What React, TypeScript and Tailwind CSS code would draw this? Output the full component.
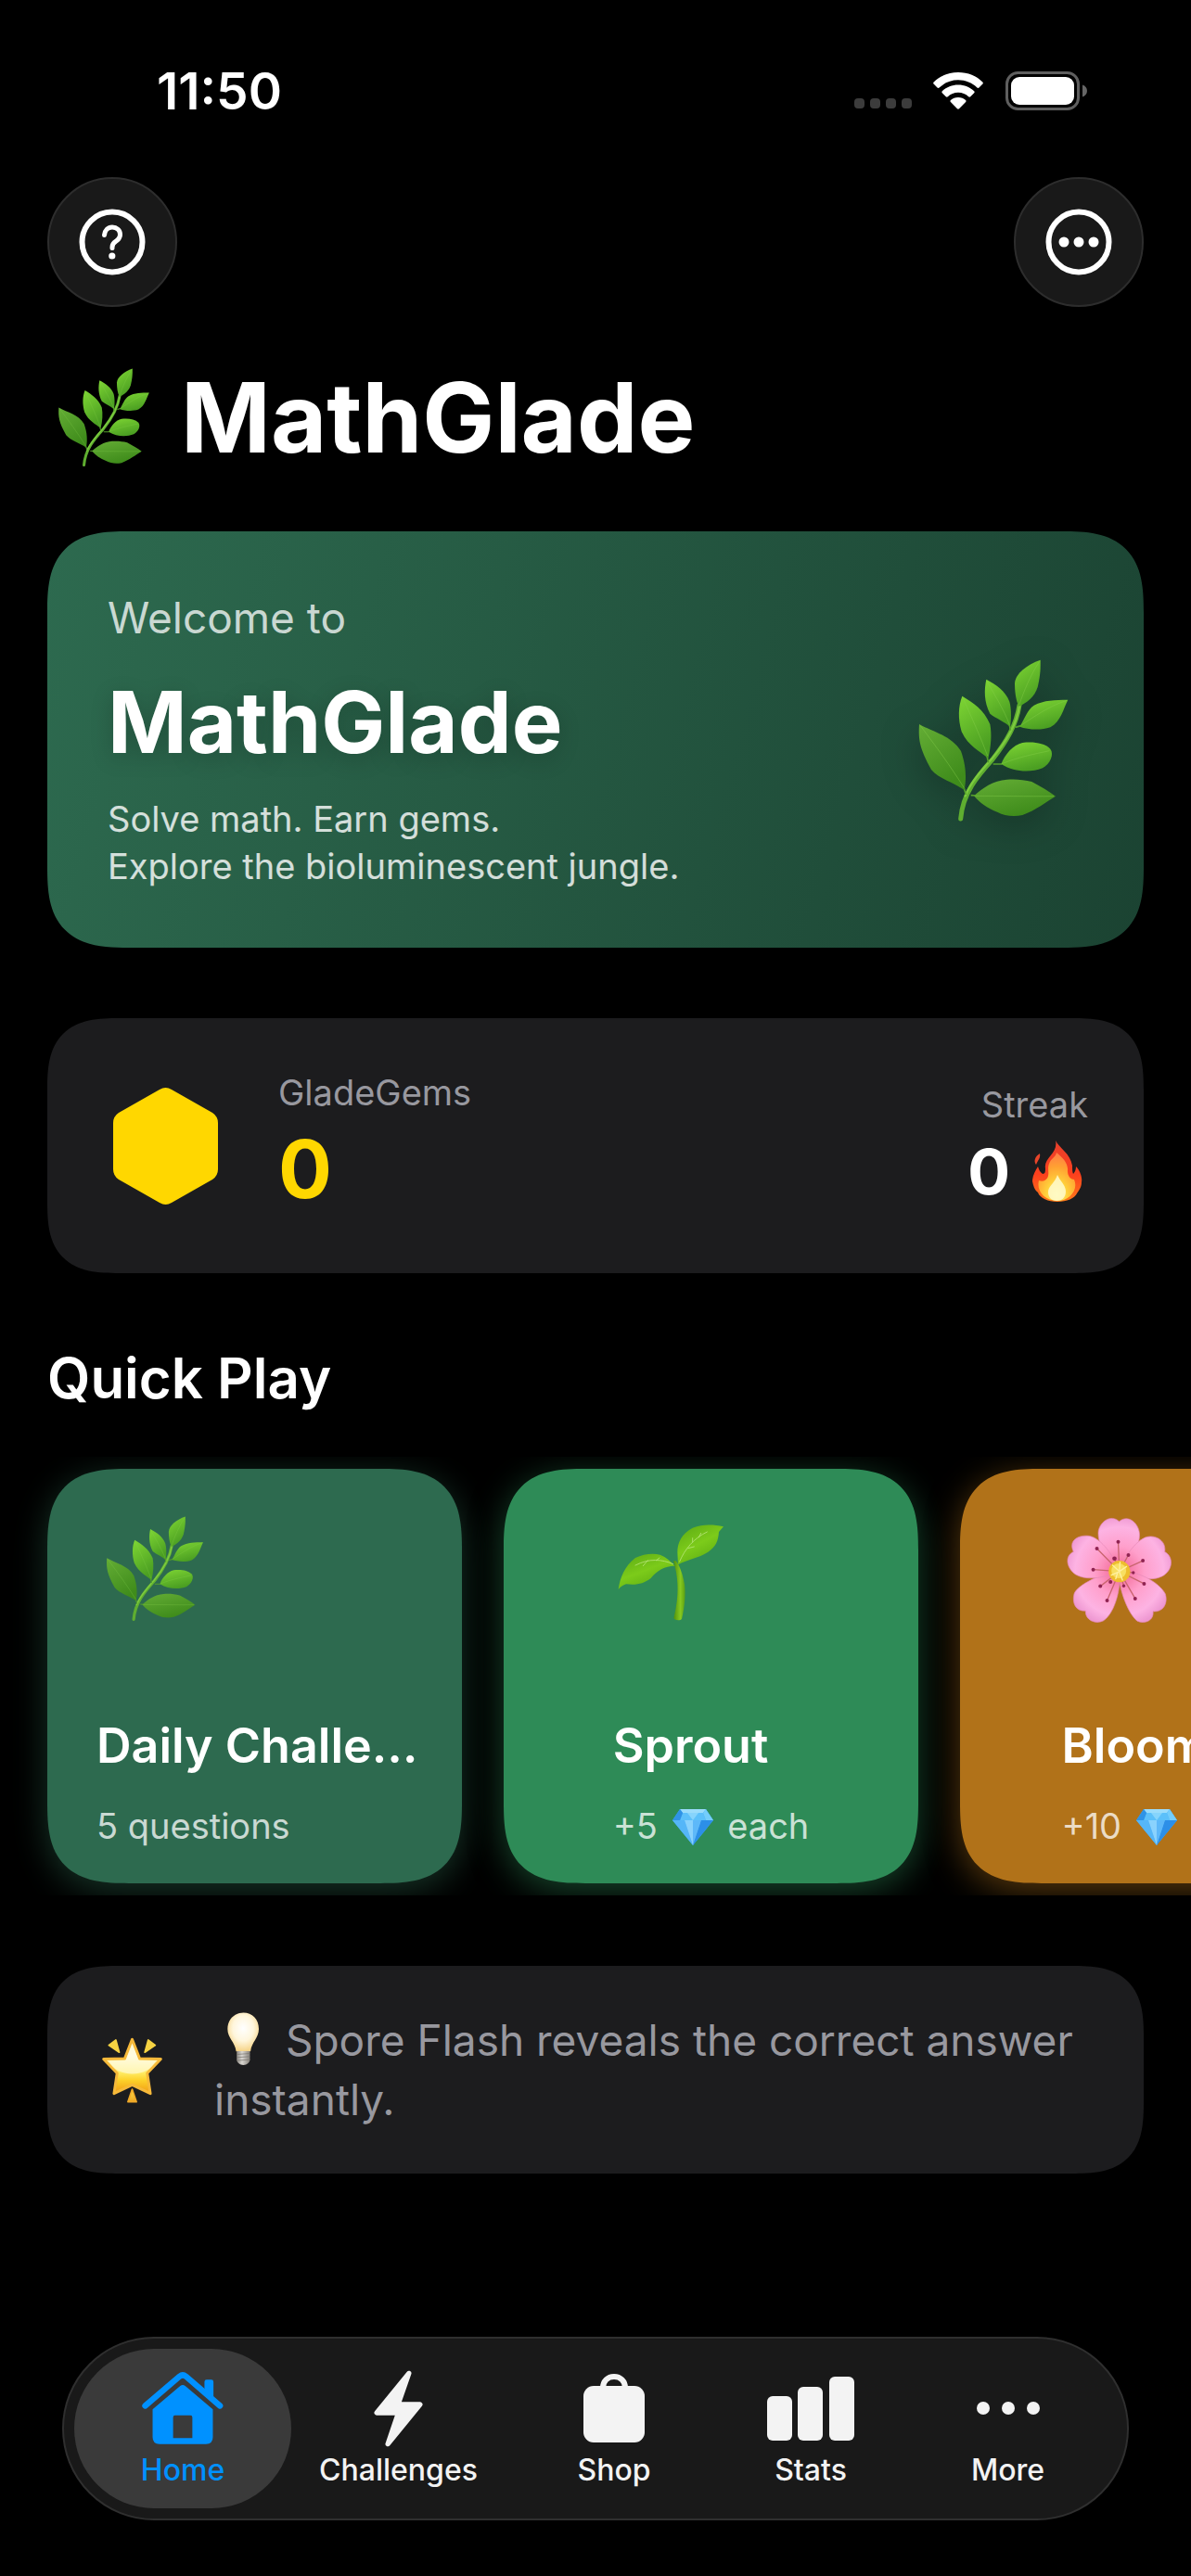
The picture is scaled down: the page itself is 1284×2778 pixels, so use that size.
import { useId } from "react";
import type { ReactNode } from "react";

type IconProps = { className?: string };

function Herb({ className }: IconProps) {
  const id = useId();
  const light = `${id}l`;
  const dark = `${id}d`;
  return (
    <svg viewBox="86 88 490 528" className={className} aria-hidden="true">
      <defs>
        <linearGradient id={light} x1="0" y1="0" x2="0.4" y2="1">
          <stop offset="0" stopColor="#7fd634" />
          <stop offset="1" stopColor="#4b9f22" />
        </linearGradient>
        <linearGradient id={dark} x1="0" y1="0" x2="0.5" y2="1">
          <stop offset="0" stopColor="#64ad35" />
          <stop offset="1" stopColor="#3f8c1b" />
        </linearGradient>
      </defs>
      <path d="M415 236C405 300 375 352 328 412C280 465 232 520 225 604" fill="none" stroke="#5fae30" strokeWidth="15" strokeLinecap="round" />
      <path d="M415 240C405 300 375 350 326 410C290 450 255 490 240 530" fill="none" stroke="#7dcb3f" strokeWidth="7" strokeLinecap="round" />
      <path d="M258 528L275 529M330 427H358M402 308L420 303M383 300L386 318M310 402L315 422M236 505L242 526" stroke="#55a02b" strokeWidth="5" />
      <path d="M483 90C440 105 402 134 400 165C400 190 403 220 413 240C440 229 465 208 474 178C480 150 484 130 483 90Z" fill={`url(#${light})`} />
      <path d="M308 153C301 185 300 225 320 264C340 280 368 290 384 306C389 290 390 250 383 225C370 190 340 170 308 153Z" fill={`url(#${light})`} />
      <path d="M230 207C217 240 216 280 228 322C250 370 288 385 314 408C324 370 326 330 320 298C300 250 265 228 230 207Z" fill={`url(#${light})`} />
      <path d="M91 298C88 350 92 375 130 445C155 475 200 485 237 511C244 470 243 435 226 385C195 335 140 325 91 298Z" fill={`url(#${dark})`} />
      <path d="M572 219C530 219 495 220 462 237C440 252 432 280 416 306C440 314 480 320 515 308C550 288 556 250 572 219Z" fill={`url(#${light})`} />
      <path d="M356 427C368 395 395 365 425 358C460 354 495 358 515 378C528 395 515 425 490 440C450 455 400 454 356 427Z" fill={`url(#${light})`} />
      <path d="M268 530C295 505 330 480 375 477C400 475 430 477 455 484C485 500 510 515 532 531C500 550 470 575 425 592C395 598 365 594 345 583C310 570 285 550 268 530Z" fill={`url(#${dark})`} />
      <g fill="none" stroke="#86cf4a" strokeOpacity="0.4" strokeWidth="3">
        <path d="M480 95C450 140 430 190 414 236M310 158C335 205 365 250 383 300M232 212C262 280 290 340 312 400M95 303C145 370 190 430 236 504M568 221C510 240 460 275 420 302M512 384C460 395 410 405 358 426M526 531C440 532 350 530 272 530" />
      </g>
    </svg>
  );
}

function Seedling({ className }: IconProps) {
  const id = useId();
  const leaf = `${id}a`;
  const stem = `${id}b`;
  return (
    <svg viewBox="80 104 348 316" className={className} aria-hidden="true">
      <defs>
        <linearGradient id={leaf} x1="0" y1="0" x2="0.6" y2="1">
          <stop offset="0" stopColor="#5aa814" />
          <stop offset="0.55" stopColor="#7ccb1a" />
          <stop offset="1" stopColor="#5fae12" />
        </linearGradient>
        <linearGradient id={stem} x1="0" y1="0" x2="1" y2="0">
          <stop offset="0" stopColor="#4f8f0c" />
          <stop offset="0.6" stopColor="#86c91f" />
          <stop offset="1" stopColor="#5c9f12" />
        </linearGradient>
      </defs>
      <path d="M263 224C278 275 284 330 264 410C268 417 285 418 290 412C300 370 303 330 299 300C294 270 284 240 271 224Z" fill={`url(#${stem})`} />
      <path d="M425 113C390 106 360 105 325 117C290 135 276 165 276 195L278 236C305 220 345 215 375 195C400 178 408 160 410 130Z" fill={`url(#${leaf})`} />
      <path d="M85 316C90 280 105 240 140 214C165 202 195 198 220 204C240 212 255 225 267 240C235 240 210 255 190 280C165 298 145 303 110 299C100 302 92 308 85 316Z" fill={`url(#${leaf})`} />
      <g fill="none" stroke="#b9e67c" strokeOpacity="0.8" strokeWidth="3" strokeLinecap="round">
        <path d="M283 226C300 185 330 150 372 130M325 163V150M345 148L352 134M310 183L330 178M262 234C225 218 185 215 140 238M208 222L218 214M180 222L165 240" />
      </g>
    </svg>
  );
}

function Blossom({ className }: IconProps) {
  const id = useId();
  const petal = `${id}p`;
  return (
    <svg viewBox="88 73 349 348" className={className} aria-hidden="true">
      <defs>
        <radialGradient id={petal} gradientUnits="userSpaceOnUse" cx="262" cy="252" r="180">
          <stop offset="0.1" stopColor="#f46f9c" />
          <stop offset="0.45" stopColor="#ff9fcb" />
          <stop offset="0.8" stopColor="#fdb3e3" />
          <stop offset="1" stopColor="#ee98d2" />
        </radialGradient>
      </defs>
      <g fill={`url(#${petal})`} stroke="#e58ab8" strokeWidth="2">
        <path d="M262 250C280 235 330 180 327 130C325 95 290 65 261 90C235 65 200 90 194 120C188 165 230 230 262 250Z" />
        <path d="M262 250C290 275 370 285 400 268C435 250 440 205 409 188C415 150 375 130 345 142C305 160 275 215 262 250Z" />
        <path d="M262 250C255 290 285 385 320 413C345 425 375 410 371 382C405 385 420 355 411 325C390 285 320 250 262 250Z" />
        <path d="M262 250C210 255 125 295 115 325C108 355 120 382 152 380C150 410 185 425 210 412C250 385 268 300 262 250Z" />
        <path d="M262 250C245 205 205 145 165 137C130 132 95 150 113 188C85 200 88 240 120 262C160 285 225 270 262 250Z" />
      </g>
      <g stroke="#c9656f" strokeWidth="4">
        <path d="M262 252L258 156M262 252L189 178M262 252L177 246M262 252L200 300M262 252L222 346M262 252L313 340M262 252L342 292M262 252L338 217M262 252L291 199M262 252L246 210M262 252L276 299M262 252L307 256" />
      </g>
      <g fill="#8f2352">
        <circle cx="258" cy="156" r="6" /><circle cx="189" cy="178" r="6" /><circle cx="177" cy="246" r="6" />
        <circle cx="200" cy="300" r="6" /><circle cx="222" cy="346" r="6" /><circle cx="313" cy="340" r="6" />
        <circle cx="342" cy="292" r="6" /><circle cx="338" cy="217" r="6" /><circle cx="291" cy="199" r="6" />
        <circle cx="246" cy="210" r="7" /><circle cx="276" cy="299" r="5" /><circle cx="307" cy="256" r="5" /><circle cx="233" cy="286" r="6" />
      </g>
      <circle cx="262" cy="252" r="35" fill="#eebd2e" />
      <circle cx="260" cy="250" r="24" fill="#f8df62" />
      <path d="M262 250L264 222M260 250L240 232M262 252L285 236M258 254L236 264M262 254L272 280M256 256L250 276" stroke="#fff0a0" strokeWidth="4" strokeLinecap="round" />
    </svg>
  );
}

function Gem({ className }: IconProps) {
  return (
    <svg viewBox="0 0 46 40" className={className} role="img" aria-label="gems">
      <path d="M9 1H37L45 13L23 40L1 13Z" fill="#3fa9f5" />
      <path d="M9 1H37L34 5H12Z" fill="#9bdcfb" />
      <path d="M12 5H34L37 13H9Z" fill="#5cc0fa" />
      <path d="M9 1L12 5L9 13H1Z" fill="#2f93e6" />
      <path d="M37 1L34 5L37 13H45Z" fill="#74cdfb" />
      <path d="M17 5L23 13L29 5Z" fill="#86d4fc" />
      <path d="M1 13H14L23 40Z" fill="#55b6f8" />
      <path d="M14 13H32L23 40Z" fill="#8ad2fd" />
      <path d="M23 13H32L23 40Z" fill="#5db8f9" />
      <path d="M32 13H45L23 40Z" fill="#2c8fe8" />
    </svg>
  );
}

function Flame({ className }: IconProps) {
  const id = useId();
  const outer = `${id}o`;
  const inner = `${id}i`;
  return (
    <svg viewBox="0 0 54 66" className={className} role="img" aria-label="fire">
      <defs>
        <linearGradient id={outer} x1="0" y1="0" x2="0" y2="1">
          <stop offset="0" stopColor="#e8402c" />
          <stop offset="0.55" stopColor="#fb3f1d" />
          <stop offset="1" stopColor="#ff7a1a" />
        </linearGradient>
        <radialGradient id={inner} cx="0.5" cy="0.88" r="0.85">
          <stop offset="0" stopColor="#fff27a" />
          <stop offset="0.35" stopColor="#ffcf3a" />
          <stop offset="0.7" stopColor="#ffa032" />
          <stop offset="1" stopColor="#ff7f45" />
        </radialGradient>
      </defs>
      <path d="M25 0C29 8 41 14 43 27C43 31 43 34 44 36C46 34 47 31 47 28C51 32 54 39 53 45C53 51 49 55 48 57C46 62 37 66 27 66C17 66 8 62 6 56C2 53 1 48 0 44C0 38 3 33 6 28C7 31 8 34 11 36C14 36 14 33 14 30C12 18 28 14 25 0Z" fill={`url(#${outer})`} />
      <path d="M8 14C9 19 6 21 4 26C1 22 3 17 8 14Z" fill="#e8452a" />
      <path d="M26 13C32 18 39 24 38 33C38 38 41 42 45 42C50 53 40 65 27 65C13 65 4 54 7 43C11 45 16 43 17 38C18 34 16 30 18 25C20 19 25 18 26 13Z" fill={`url(#${inner})`} />
      <path d="M27 37C30 44 36 48 36 55C36 62 31 65 26 65C21 65 17 61 17 56C17 49 24 46 27 37Z" fill="#fffbd0" fillOpacity="0.85" />
    </svg>
  );
}

function GlowStar({ className }: IconProps) {
  const id = useId();
  const fill = `${id}s`;
  const ray = `${id}r`;
  return (
    <svg viewBox="28 109 202 214" className={className} aria-hidden="true">
      <defs>
        <linearGradient id={fill} x1="0" y1="0" x2="0" y2="1">
          <stop offset="0" stopColor="#fff3a8" />
          <stop offset="0.3" stopColor="#fffbd8" />
          <stop offset="0.6" stopColor="#ffee6a" />
          <stop offset="0.75" stopColor="#fdd22a" />
          <stop offset="1" stopColor="#f19a14" />
        </linearGradient>
        <linearGradient id={ray} x1="0" y1="0" x2="0" y2="1">
          <stop offset="0" stopColor="#fbe24c" />
          <stop offset="1" stopColor="#eda623" />
        </linearGradient>
      </defs>
      <path d="M129 116L153 178L222 180L178 226L188 292L129 264L70 292L80 226L36 180L105 178Z" fill={`url(#${fill})`} stroke="#f6b93a" strokeWidth="9" strokeLinejoin="round" />
      <path d="M129 130L150 184L205 186C190 215 165 228 129 228C95 228 68 215 53 186L108 184Z" fill="#fffce6" fillOpacity="0.6" />
      <path d="M53 135L76 118L87 158ZM204 135L181 118L170 158Z" fill="#f6d343" stroke="#f6d343" strokeWidth="5" strokeLinejoin="round" />
      <path d="M129 278L143 319H115Z" fill={`url(#${ray})`} stroke="#f0a928" strokeWidth="5" strokeLinejoin="round" />
    </svg>
  );
}

function Bulb({ className }: IconProps) {
  const id = useId();
  const glass = `${id}g`;
  const cap = `${id}c`;
  return (
    <svg viewBox="437 34 106 174" className={className} role="img" aria-label="tip">
      <defs>
        <radialGradient id={glass} cx="0.5" cy="0.4" r="0.6">
          <stop offset="0" stopColor="#ffffff" />
          <stop offset="0.55" stopColor="#fff6dc" />
          <stop offset="1" stopColor="#f6d488" />
        </radialGradient>
        <linearGradient id={cap} x1="0" y1="0" x2="1" y2="0">
          <stop offset="0" stopColor="#8e8a84" />
          <stop offset="0.4" stopColor="#dad7d2" />
          <stop offset="1" stopColor="#858079" />
        </linearGradient>
      </defs>
      <path d="M490 35C462 35 438 56 438 88C438 118 462 130 466 161H513C517 130 540 118 540 88C540 56 518 35 490 35Z" fill={`url(#${glass})`} />
      <path d="M468 160H511V190C509 198 502 205 490 206C477 205 470 198 468 190Z" fill={`url(#${cap})`} />
      <path d="M468 171L511 168M468 181L511 178M469 191L511 188" stroke="#77726b" strokeWidth="2" />
    </svg>
  );
}

function HomeIcon() {
  return (
    <svg viewBox="69 83 262 233" className="h-[78px] w-[88px]" fill="#0091ff" aria-hidden="true">
      <path d="M79 192L190 97Q200 89 210 97L320 192" fill="none" stroke="#0091ff" strokeWidth="19" strokeLinecap="round" strokeLinejoin="round" />
      <path d="M270 140V115Q270 108 277 108H292Q299 108 299 115V170Z" />
      <path fillRule="evenodd" d="M103 203L192 128Q200 122 208 128L297 203V293Q297 315 275 315H125Q103 315 103 293ZM175 223Q169 223 169 229V296H231V229Q231 223 225 223Z" />
    </svg>
  );
}

function BoltIcon() {
  return (
    <svg viewBox="821 73 158 249" className="h-[83px] w-[53px]" aria-hidden="true">
      <path d="M934 83L830 211H900L866 312L970 184H899Z" fill="currentColor" stroke="currentColor" strokeWidth="16" strokeLinejoin="round" />
    </svg>
  );
}

function BagIcon() {
  return (
    <svg viewBox="0 0 66 74" className="h-[74px] w-[66px]" aria-hidden="true">
      <path d="M21 18V15C21 8 26 3 33 3C40 3 45 8 45 15V18" fill="none" stroke="currentColor" strokeWidth="6" />
      <rect x="0" y="13" width="66" height="61" rx="11" fill="currentColor" />
    </svg>
  );
}

function StatsIcon() {
  return (
    <svg viewBox="0 0 94 69" className="h-[69px] w-[94px]" fill="currentColor" aria-hidden="true">
      <rect x="0" y="21" width="27" height="48" rx="6" />
      <rect x="33" y="11" width="27" height="58" rx="6" />
      <rect x="67" y="0" width="27" height="69" rx="6" />
    </svg>
  );
}

function MoreIcon() {
  return (
    <svg viewBox="0 0 70 14" className="h-[14px] w-[70px]" fill="currentColor" aria-hidden="true">
      <circle cx="8" cy="7" r="7" />
      <circle cx="35" cy="7" r="7" />
      <circle cx="62" cy="7" r="7" />
    </svg>
  );
}

function StatusBar() {
  return (
    <div className="flex items-center justify-between pt-[68px] pr-[112px] pl-[169px]">
      <time className="text-[55px] leading-[60px] font-semibold">11:50</time>
      <div className="flex items-center">
        <svg viewBox="0 0 62 42" className="mr-[23px] h-[42px] w-[62px]" fill="#3c3c3c" aria-label="No signal" role="img">
          <rect x="0" y="29" width="11" height="11" rx="4" />
          <rect x="17" y="29" width="11" height="11" rx="4" />
          <rect x="34" y="29" width="11" height="11" rx="4" />
          <rect x="51" y="29" width="11" height="11" rx="4" />
        </svg>
        <svg viewBox="0 0 54 40" className="mr-[24px] h-[40px] w-[54px]" fill="currentColor" aria-label="Wi-Fi" role="img">
          <path d="M27 0C16.500 0 7 4 .7 10.500C0 11.200 0 12 .6 12.600L4.500 16.500C5.100 17.100 6 17.100 6.600 16.500C12 11.300 19.200 8.300 27 8.300C34.800 8.300 42 11.300 47.400 16.500C48 17.100 48.900 17.100 49.500 16.500L53.400 12.600C54 12 54 11.200 53.300 10.500C47 4 37.500 0 27 0Z" />
          <path d="M27 13.500C20.300 13.500 14.300 16 9.800 20.200C9.200 20.800 9.200 21.600 9.800 22.200L13.800 26.200C14.400 26.800 15.200 26.800 15.800 26.300C18.800 23.500 22.700 21.800 27 21.800C31.300 21.800 35.200 23.500 38.200 26.300C38.800 26.800 39.600 26.800 40.200 26.200L44.200 22.200C44.800 21.600 44.800 20.800 44.200 20.200C39.700 16 33.700 13.500 27 13.500Z" />
          <path d="M27 27C23.800 27 21 28.200 18.900 30.100C18.300 30.700 18.300 31.500 18.900 32L26 39.300C26.600 39.900 27.400 39.900 28 39.300L35.100 32C35.700 31.500 35.700 30.700 35.100 30.100C33 28.200 30.200 27 27 27Z" />
        </svg>
        <svg viewBox="0 0 88 42" className="h-[42px] w-[88px]" aria-label="Battery full" role="img">
          <rect x="1.500" y="1.500" width="77" height="39" rx="12" fill="none" stroke="#5f5f5f" strokeWidth="3" />
          <rect x="6" y="6" width="68" height="30" rx="9" fill="#fff" />
          <path d="M83 14.500C86 15.500 88 18 88 21C88 24 86 26.500 83 27.500Z" fill="#666" />
        </svg>
      </div>
    </div>
  );
}

function RoundButton({ label, children }: { label: string; children: ReactNode }) {
  return (
    <button
      type="button"
      aria-label={label}
      className="flex size-[140px] items-center justify-center rounded-full border-2 border-[#2d2d2d] bg-[#191919]"
    >
      <svg viewBox="0 0 72 72" className="size-[72px]" aria-hidden="true">
        <circle cx="36" cy="36" r="32.500" fill="none" stroke="currentColor" strokeWidth="6" />
        {children}
      </svg>
    </button>
  );
}

type QuickCard = {
  title: string;
  color: string;
  icon: ReactNode;
  note: ReactNode;
};

const quickCards: QuickCard[] = [
  {
    title: "Daily Challenge",
    color: "bg-[#2d6a4f] shadow-[0_8px_36px_#2d6a4f80]",
    icon: <Herb className="ml-[10px] h-[114px] w-[106px]" />,
    note: "5 questions",
  },
  {
    title: "Sprout",
    color: "bg-[#2e8b57] shadow-[0_8px_36px_#2e8b5780]",
    icon: <Seedling className="mt-2 ml-1 h-[106px] w-[116px]" />,
    note: (
      <>
        +5 <Gem className="mx-[4px] inline-block h-[40px] w-[46px] align-[-7px]" /> each
      </>
    ),
  },
  {
    title: "Bloom",
    color: "bg-[#b17219] shadow-[0_8px_36px_#b1721980]",
    icon: <Blossom className="ml-1 size-[116px]" />,
    note: (
      <>
        +10 <Gem className="mx-[4px] inline-block h-[40px] w-[46px] align-[-7px]" /> each
      </>
    ),
  },
];

const tabs = [
  { label: "Home", icon: <HomeIcon />, size: "flex-[234]", active: true },
  { label: "Challenges", icon: <BoltIcon />, size: "flex-[231]", active: false },
  { label: "Shop", icon: <BagIcon />, size: "flex-[234]", active: false },
  { label: "Stats", icon: <StatsIcon />, size: "flex-[190]", active: false },
  { label: "More", icon: <MoreIcon />, size: "flex-[235]", active: false },
];

const smoothLarge =
  "rounded-[64px] supports-[corner-shape:squircle]:rounded-[88px] supports-[corner-shape:squircle]:[corner-shape:superellipse(1.5)]";
const smoothMedium =
  "rounded-[56px] supports-[corner-shape:squircle]:rounded-[78px] supports-[corner-shape:squircle]:[corner-shape:superellipse(1.5)]";

export default function App() {
  return (
    <div className="flex min-h-screen w-full flex-col overflow-x-hidden bg-black font-['Inter',sans-serif] text-white">
      <StatusBar />

      <header className="mt-[63px] px-[51px]">
        <div className="flex justify-between">
          <RoundButton label="Help">
            <path d="M27.500 28.500C28 23.500 31.500 20 36 20C41 20 44.500 23.500 44.500 27.800C44.500 31.500 42.800 33.300 40 35.200C37.200 37 36 38.600 36 41.500V42.500" fill="none" stroke="currentColor" strokeWidth="5" strokeLinecap="round" />
            <circle cx="35.800" cy="51" r="3.600" fill="currentColor" />
          </RoundButton>
          <RoundButton label="More options">
            <circle cx="20" cy="36" r="5.500" fill="currentColor" />
            <circle cx="36" cy="36" r="5.500" fill="currentColor" />
            <circle cx="52" cy="36" r="5.500" fill="currentColor" />
          </RoundButton>
        </div>
        <h1 className="mt-[59px] flex items-center gap-[33px] pl-[11px] text-[104px] leading-[120px] font-bold">
          <Herb className="h-[107px] w-[100px]" />
          MathGlade
        </h1>
      </header>

      <main className="mt-[63px]">
        <section className={`mx-[51px] flex items-center justify-between bg-linear-[105deg] from-[#2d6a4f] to-[#1b4332] px-[65px] pt-16 pb-[62px] ${smoothLarge}`}>
          <div>
            <p className="text-[46px] leading-[58px] text-white/75">Welcome to</p>
            <h2 className="mt-[26px] text-[92px] leading-[115px] font-bold [text-shadow:0_6px_24px_#00000033]">MathGlade</h2>
            <p className="mt-[22px] text-[38px] leading-[51px] text-white/80">
              Solve math. Earn gems.
              <br />
              Explore the bioluminescent jungle.
            </p>
          </div>
          <Herb className="mr-[15px] h-[176px] w-[164px] drop-shadow-[0_10px_20px_#00000044]" />
        </section>

        <section className={`mx-[51px] mt-19 flex items-center bg-[#1c1c1e] py-[55px] pr-[60px] pl-[71px] ${smoothMedium}`}>
          <svg viewBox="0 0 113 128" className="h-[128px] w-[113px]" aria-hidden="true">
            <path d="M50 3Q56.500 -1 63 3L107 28Q113 32 113 39V89Q113 96 107 100L63 125Q56.500 129 50 125L6 100Q0 96 0 89V39Q0 32 6 28Z" fill="#ffd700" />
          </svg>
          <div className="ml-[65px] pb-1">
            <h3 className="text-[38px] leading-[50px] text-[#98989f]">GladeGems</h3>
            <p className="mt-1.5 text-[86px] leading-[105px] font-bold text-[#ffd700]">0</p>
          </div>
          <div className="ml-auto flex flex-col items-end">
            <h3 className="text-[38px] leading-[50px] text-[#98989f]">Streak</h3>
            <p className="mt-[5px] flex items-center gap-6 pr-1.5 text-[68px] leading-[84px] font-bold">
              0
              <Flame className="h-[66px] w-[54px]" />
            </p>
          </div>
        </section>

        <section className="mt-19">
          <h2 className="px-[51px] text-[60px] leading-[75px] font-semibold">Quick Play</h2>
          <div className="mt-[47px] flex gap-[45px] overflow-x-auto px-[51px] py-[13px] [scrollbar-width:none]">
            {quickCards.map((card) => (
              <button
                key={card.title}
                type="button"
                className={`flex size-[447px] shrink-0 flex-col items-center px-[53px] pt-[51px] text-left ${smoothLarge} ${card.color}`}
              >
                <span className="block max-w-full">
                  <span className="flex h-[216px] items-start">{card.icon}</span>
                  <span className="-mr-6 block truncate text-[52px] leading-[64px] font-semibold">{card.title}</span>
                  <span className="mt-[29px] block text-[38px] leading-[50px] whitespace-nowrap text-white/75">{card.note}</span>
                </span>
              </button>
            ))}
          </div>
        </section>

        <section className={`mx-[51px] mt-19 flex items-center gap-[55px] bg-[#1c1c1e] px-[58px] py-12 ${smoothMedium}`}>
          <GlowStar className="h-[71px] w-[67px] shrink-0" />
          <p className="text-[46px] leading-[64px] text-[#98989f]">
            <Bulb className="mr-[15px] ml-[14px] inline-block h-[58px] w-[35px] align-[-11px]" /> Spore Flash reveals the correct answer instantly.
          </p>
        </section>
      </main>

      <nav className="mx-[67px] mt-auto mb-[60px] flex rounded-full border-2 border-[#2f2f2f] bg-[#191919] p-[11px]">
        {tabs.map((tab) => (
          <button
            key={tab.label}
            type="button"
            aria-current={tab.active ? "page" : undefined}
            className={`flex min-w-0 flex-col items-center rounded-full pt-[21px] pb-[22px] ${tab.size} ${
              tab.active ? "bg-[#3a3a3a] text-[#0091ff]" : "text-[#f3f3f3]"
            }`}
          >
            <span className="flex h-[86px] items-center">{tab.icon}</span>
            <span className="mt-[5px] text-[32px] leading-[38px] font-medium">{tab.label}</span>
          </button>
        ))}
      </nav>
    </div>
  );
}
